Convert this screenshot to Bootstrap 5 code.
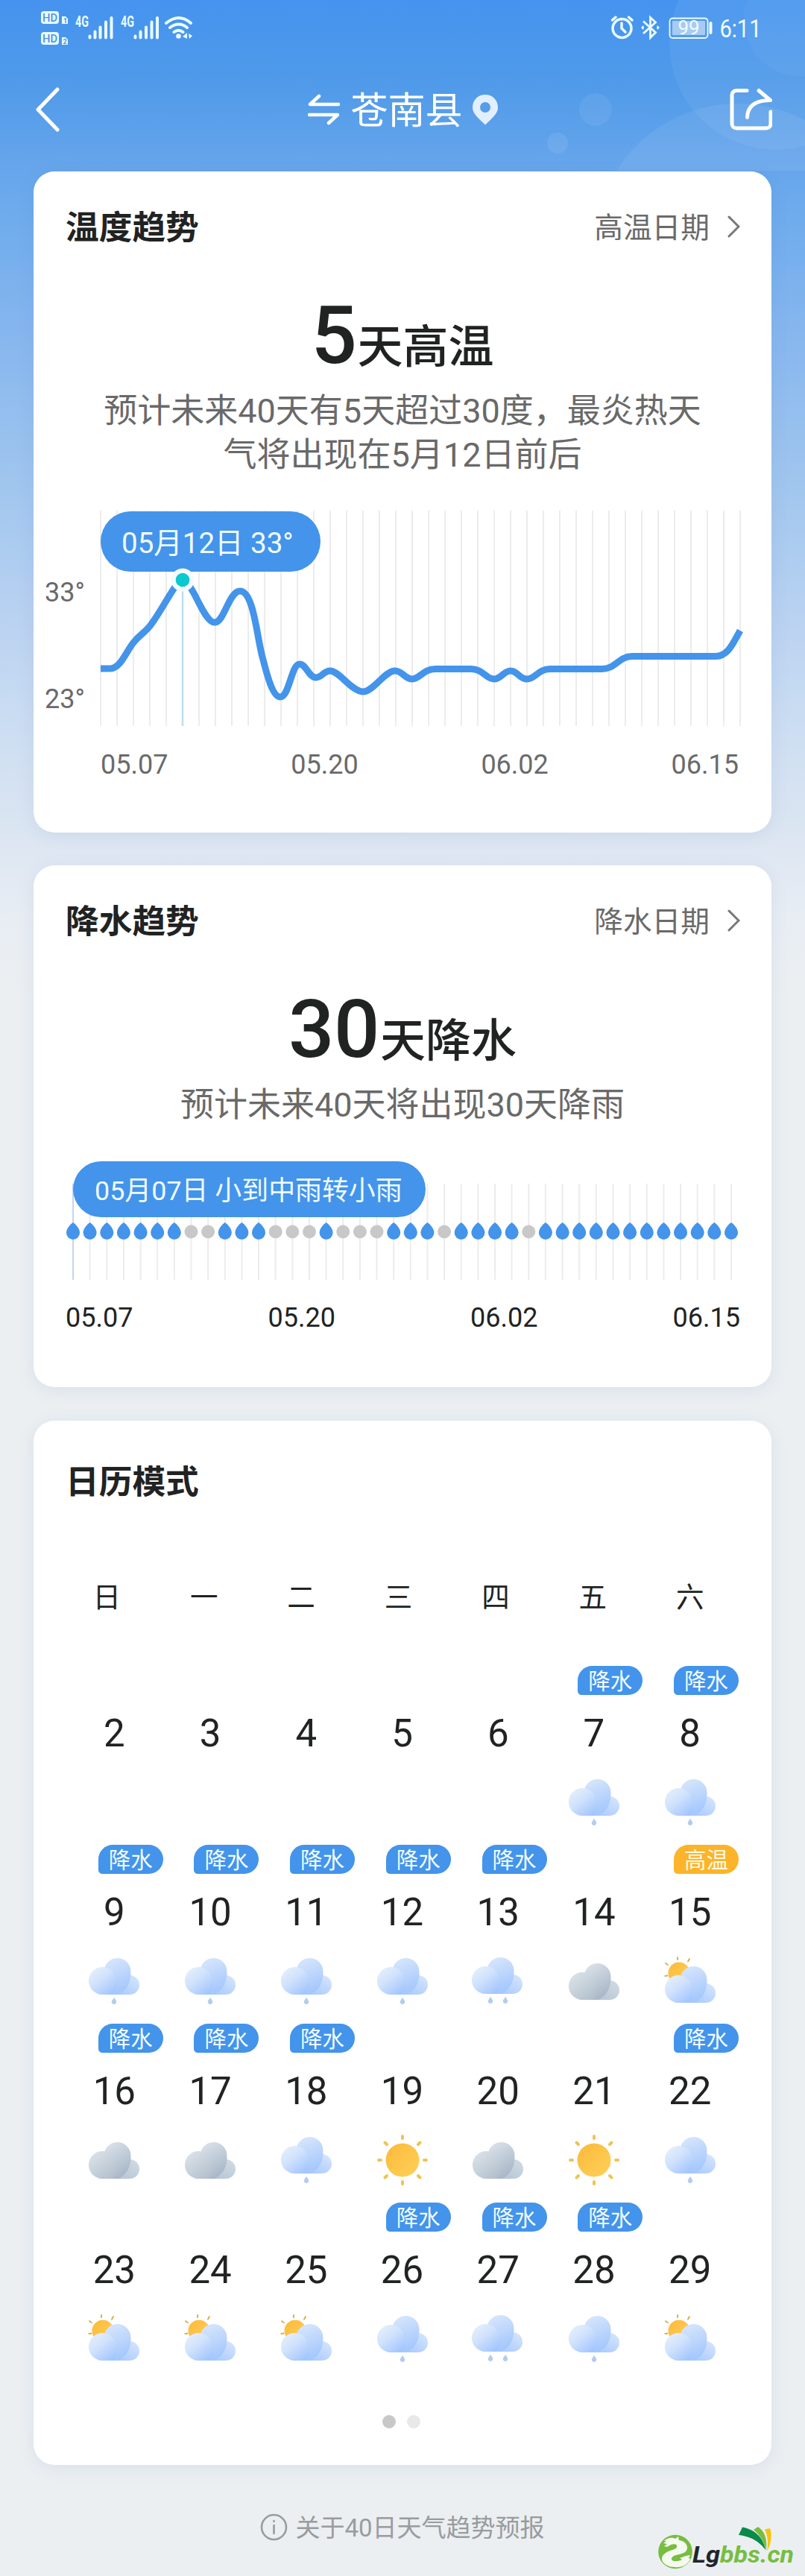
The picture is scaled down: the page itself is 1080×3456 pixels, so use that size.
<!DOCTYPE html>
<html lang="zh-CN">
<head>
<meta charset="utf-8">
<meta name="viewport" content="width=device-width, initial-scale=1">
<title>40日天气趋势</title>
<link href="https://cdn.jsdelivr.net/npm/bootstrap@5.3.0/dist/css/bootstrap.min.css" rel="stylesheet">
<style>
  body { width: 1080px; height: 3456px; font-family: Roboto, "Noto Sans CJK SC", sans-serif; color: #212323; overflow-x: hidden;
    background: linear-gradient(180deg, #4593ef 0, #4f9ae9 110px, #66a5eb 220px, #6dabed 280px, #84b5ee 430px, #9fc5ee 640px, #b5d0f1 800px, #cfdff2 1000px, #dde6f2 1130px, #e8edf4 1230px, #ebeff2 1330px) no-repeat #ebeff2; }
  svg { display: block; flex: none; }
  .sky-bubbles { position: absolute; top: 0; right: 0; z-index: 0; }
  .statusbar { height: 72px; padding: 0 54px 0 55px; }
  .topnav { height: 158px; padding: 0 44px 8px 46px; }
  .place { font-size: 50px; line-height: 60px; color: #fff; padding-top: 3px; margin: 0 12px 0 15px; }
  .panel { width: 990px; border: 0; border-radius: 28px; background: #fff; box-shadow: 0 4px 22px rgba(80,110,170,.10); }
  .panel-temp { height: 887px; }
  .panel-rain { height: 700px; margin-top: 44px; }
  .panel-cal { height: 1401px; margin-top: 45px; }
  .panel-head { height: 148px; padding: 4px 42px 0 43px; }
  .panel-cal .panel-head { height: 162px; }
  .panel-title { font-size: 44.7px; line-height: 60px; font-weight: 700; margin: 0; }
  .panel-link { font-size: 38.7px; line-height: 60px; color: #6a6a6a; text-decoration: none; }
  .headline { height: 144px; padding-top: 22px; line-height: 100px; }
  .headline-num { font-size: 108px; font-weight: 500; letter-spacing: -.5px; }
  .headline-unit { font-size: 61px; font-weight: 500; margin-left: 1px; }
  .summary { font-size: 45px; line-height: 59px; color: #696969; margin: 0; }
  .temp-chart { height: 289px; margin-top: 45px; }
  .rain-chart { height: 159px; margin-top: 46px; }
  .bubble { position: absolute; background: #4394ea; color: #f0fcff; border-radius: 41px; white-space: nowrap; }
  .bubble-temp { left: 90px; top: 1px; width: 295px; height: 81px; font-size: 38.5px; line-height: 86px; padding-left: 28px; }
  .bubble-rain { left: 53px; top: 0; width: 473px; height: 75px; font-size: 35.9px; line-height: 80px; padding-left: 29px; }
  .deg { position: absolute; left: 15px; font-size: 36px; line-height: 40px; color: #6a6a6a; }
  .deg-hi { top: 90px; } .deg-lo { top: 233px; }
  .axis { font-size: 36px; line-height: 50px; }
  .axis-temp { color: #6a6a6a; padding: 0 44px 0 90px; margin-top: 27px; }
  .axis-rain { padding: 0 42px 0 43px; margin-top: 26px; }
  .week { font-size: 37.5px; line-height: 60px; padding: 0 44px 0 33px; margin: 45px 0 62px; }
  .week > div, .days > div { flex: 1 1 0; width: 0; min-width: 0; text-align: center; }
  .days { padding: 0 45px 0 44px; height: 240px; }
  .tagline { height: 39px; }
  .tag { display: block; width: 87px; height: 39px; line-height: 42px; font-size: 29.5px; color: #f2fdff; background: #4394ea; border-radius: 22px 22px 22px 6px; margin-left: 42.7px; }
  .tag.hot { background: #fcb42a; color: #fffbe6; }
  .daynum { font-size: 51px; line-height: 60px; margin: 22px 0 26px; height: 60px; }
  .wx { width: 72px; height: 72px; margin: 0 auto; }
  .pages { gap: 15px; padding: 45px 3px 0 0; }
  .pg { width: 18px; height: 18px; border-radius: 50%; background: #c8c8c8; }
  .pg-off { background: #e8e8e8; }
  .about { font-size: 33px; line-height: 50px; color: #999c9e; margin-top: 57px; gap: 10px; }
  .about span { padding-top: 3px; }
  .watermark { position: absolute; left: 880px; top: 3386px; }
</style>
</head>
<body class="position-relative">

<svg class="sky-bubbles" width="380" height="229" viewBox="700 0 380 229">
  <g fill="#fff">
    <circle cx="1041" cy="58" r="143" opacity=".06"/>
    <circle cx="1076" cy="25" r="78" opacity=".04"/>
    <circle cx="990" cy="332" r="193" opacity=".07"/>
    <circle cx="799" cy="147" r="22" opacity=".07"/>
    <circle cx="748" cy="192" r="14" opacity=".08"/>
  </g>
</svg>

<div class="statusbar position-relative d-flex justify-content-between">
  <svg width="210" height="72" viewBox="55 0 210 72" fill="#eafcff" font-family="Roboto, sans-serif">
    <rect x="55" y="15" width="24" height="17" rx="4"/>
    <text x="57" y="29" font-size="15" font-weight="500" fill="#4c92e4" textLength="20" lengthAdjust="spacingAndGlyphs">HD</text>
    <path d="M83 22h5l3 3v7h-8z"/>
    <text x="85" y="30.500" font-size="9" font-weight="700" fill="#4c92e4">1</text>
    <rect x="55" y="43" width="24" height="17" rx="4"/>
    <text x="57" y="57" font-size="15" font-weight="500" fill="#4c92e4" textLength="20" lengthAdjust="spacingAndGlyphs">HD</text>
    <path d="M83 50h5l3 3v7h-8z"/>
    <text x="84.500" y="58.500" font-size="9" font-weight="700" fill="#4c92e4">2</text>
    <text x="101" y="36" font-size="20" font-weight="700" textLength="18" lengthAdjust="spacingAndGlyphs">4G</text>
    <text x="162" y="36" font-size="20" font-weight="700" textLength="18" lengthAdjust="spacingAndGlyphs">4G</text>
    <path stroke="#eafcff" stroke-width="4" stroke-linecap="round" d="M120.500 48.500v2M127.500 42.500v8M134.500 36.500v14M142 29.500v21M149.500 24v26.500M181.500 48.500v2M188.500 42.500v8M196 36.500v14M203.500 29.500v21M211 24v26.500"/>
    <g fill="none" stroke="#eafcff" stroke-width="4" stroke-linecap="round">
      <path d="M223 31q17-14 33 0M228 37q12-9 23 0M233.500 43q6-4.500 12 0"/>
    </g>
    <circle cx="239.500" cy="48.500" r="3.300"/>
    <path d="M245 49l6-5v8zM253 45l5 3-4 4z"/>
  </svg>
  <svg width="210" height="72" viewBox="816 0 210 72" fill="none" stroke="#eafcff" font-family="Roboto, sans-serif">
    <circle cx="834.500" cy="38" r="12.500" stroke-width="3.500"/>
    <path stroke-width="3.500" stroke-linecap="round" d="M834 31v7l5 5M821.500 27l4.500-4M848 27l-4.500-4"/>
    <path stroke-width="2.800" d="M863 28.500l16.500 15-7 7V23.500l7 6.500-16.500 15"/>
    <path fill="#eafcff" stroke="none" d="M860 37l3-3 1 3-1 3zM885 37l-3-3-1 3 1 3z"/>
    <rect x="898.500" y="24.500" width="51" height="26.500" rx="4" stroke-width="1.800"/>
    <rect x="902" y="28" width="44" height="19" rx="1" fill="#a7cbf3" stroke="none"/>
    <path stroke-width="4" stroke-linecap="round" d="M953.500 31v13"/>
    <g fill="#f0fdff" stroke="none">
      <text x="909.500" y="46" font-size="25" textLength="29" lengthAdjust="spacingAndGlyphs">99</text>
      <text x="965.500" y="50" font-size="34" textLength="56" lengthAdjust="spacingAndGlyphs">6:11</text>
    </g>
  </svg>
</div>

<nav class="topnav position-relative d-flex align-items-center justify-content-between">
  <svg width="56" height="60" viewBox="0 0 56 60" fill="none" stroke="#fff" stroke-width="5" stroke-linecap="round" stroke-linejoin="round"><path d="M31 3L5 30l26 27"/></svg>
  <div class="d-flex align-items-center">
    <svg width="43" height="42" viewBox="0 0 43 42" fill="none" stroke="#fff" stroke-width="4.500" stroke-linecap="round" stroke-linejoin="round"><path d="M15 3L3 14h38M2 28h38L28 39"/></svg>
    <span class="place">苍南县</span>
    <svg width="36" height="42" viewBox="0 0 36 42"><path fill="#e1efff" fill-rule="evenodd" d="M18 1C8 1 1 8.500 1 18c0 8 6 13 17 23.500C29 31 35 26 35 18 35 8.500 28 1 18 1zm0 10a7 7 0 1 1 0 14 7 7 0 0 1 0-14z"/></svg>
  </div>
  <svg width="57" height="58" viewBox="0 0 57 58" fill="none" stroke="#fff" stroke-width="5" stroke-linecap="round" stroke-linejoin="round"><path d="M23 3.500H9a6 6 0 0 0-6 6V48a6 6 0 0 0 6 6h40a6 6 0 0 0 6-6V32"/><path d="M23.500 39.500C24 25 33 16.500 54.500 16.500L39 3.500"/></svg>
</nav>

<main class="position-relative d-flex flex-column align-items-center">
  <section class="card panel panel-temp">
    <div class="panel-head d-flex align-items-center justify-content-between">
      <h2 class="panel-title">温度趋势</h2>
      <a class="panel-link d-flex align-items-center gap-4" href="#">高温日期
        <svg class="mb-1" width="17" height="32" viewBox="0 0 17 32" fill="none" stroke="#777" stroke-width="3" stroke-linecap="round"><path d="M2 3l13 13L2 29"/></svg></a>
    </div>
    <div class="headline d-flex justify-content-center align-items-baseline"><span class="headline-num">5</span><span class="headline-unit">天高温</span></div>
    <p class="summary text-center">预计未来40天有5天超过30度，最炎热天<br>气将出现在5月12日前后</p>
    <div class="temp-chart position-relative">
      <svg width="990" height="289" viewBox="45 685 990 289" fill="none">
        <g id="tempGrid" stroke="#ececec" stroke-width="2"></g>
        <path stroke="#bcdff2" stroke-width="2.500" d="M245 778V974"/>
        <path stroke="#4394ea" stroke-width="9" d="M135 897H148C162 897 170 872 180 861C189 850 196 848 204 836C217 818 228 796 236 786Q245 773 254 786C265 801 276 835 288 835C301 835 307 793 322 793C341 793 345 860 353 885C358 905 366 935 376 935C388 935 391 891 402 891C411 891 414 909 424 909C432 909 434 900 443 900C455 900 472 928 487 928C501 928 516 900 530 900C540 900 543 911 553 911C563 911 568 897.500 584 897.500H632C648 897.500 652 911 663 911C672 911 676 900 685 900C694 900 697 911 707 911C718 911 722 897.500 738 897.500H808C826 897.500 830 880.500 848 880.500H960C977 880.500 984 862 993 846"/>
      </svg>
      <div class="bubble bubble-temp">05月12日 33°</div>
      <svg class="position-absolute top-0 start-0" width="990" height="289" viewBox="45 685 990 289"><circle cx="245" cy="778" r="15.500" fill="#f3fbff"/><circle cx="245" cy="778" r="9.300" fill="#0cc8cf"/></svg>
      <span class="deg deg-hi">33°</span>
      <span class="deg deg-lo">23°</span>
    </div>
    <div class="axis axis-temp d-flex justify-content-between"><span>05.07</span><span>05.20</span><span>06.02</span><span>06.15</span></div>
  </section>

  <section class="card panel panel-rain">
    <div class="panel-head d-flex align-items-center justify-content-between">
      <h2 class="panel-title">降水趋势</h2>
      <a class="panel-link d-flex align-items-center gap-4" href="#">降水日期
        <svg class="mb-1" width="17" height="32" viewBox="0 0 17 32" fill="none" stroke="#777" stroke-width="3" stroke-linecap="round"><path d="M2 3l13 13L2 29"/></svg></a>
    </div>
    <div class="headline d-flex justify-content-center align-items-baseline"><span class="headline-num">30</span><span class="headline-unit">天降水</span></div>
    <p class="summary text-center">预计未来40天将出现30天降雨</p>
    <div class="rain-chart position-relative">
      <svg width="990" height="159" viewBox="45 1558 990 159">
        <g id="rainGrid" stroke="#ececec" stroke-width="2"></g>
        <g id="rainDrops"></g>
      </svg>
      <div class="bubble bubble-rain">05月07日 小到中雨转小雨</div>
    </div>
    <div class="axis axis-rain d-flex justify-content-between"><span>05.07</span><span>05.20</span><span>06.02</span><span>06.15</span></div>
  </section>

  <section class="card panel panel-cal">
    <div class="panel-head d-flex align-items-center"><h2 class="panel-title">日历模式</h2></div>
    <div class="week d-flex"><div>日</div><div>一</div><div>二</div><div>三</div><div>四</div><div>五</div><div>六</div></div>
    <div id="calendar"></div>
    <div class="pages d-flex justify-content-center"><span class="pg"></span><span class="pg pg-off"></span></div>
  </section>
</main>

<footer class="about d-flex justify-content-center align-items-center">
  <svg width="37" height="37" viewBox="0 0 37 37" fill="none" stroke="#999c9e" stroke-width="2.600" stroke-linecap="round"><circle cx="18.500" cy="18.500" r="16.500"/><path d="M18.500 16v11M18.500 10v.8"/></svg>
  <span>关于40日天气趋势预报</span>
</footer>

<svg class="watermark" width="190" height="66" viewBox="880 3386 190 66">
  <circle cx="906" cy="3423.500" r="22.800" fill="#77bd3f"/>
  <path fill="#f4faf0" d="M891 3409c5-5 11-5 15-3l4-3 1 5c7 1 11 5 11 10 0 6-6 8-11 9-6 1-10 3-10 6 0 4 9 4 14 1l-3-2 8-3 6-1-2 4 2 1c-4 9-12 12-21 11-9 0-17-5-17-11 0-7 8-10 14-12 4-1 7-3 6-6-1-2-4-2-8-1l-5 3-4-1 4-3-5-1 4-3z"/>
  <g font-family="Roboto, sans-serif" font-size="32" font-weight="700" font-style="italic">
    <text x="929" y="3437.500" fill="#20252b" textLength="37" lengthAdjust="spacingAndGlyphs">Lg</text>
    <text x="966" y="3437.500" fill="#77bd3f" textLength="99" lengthAdjust="spacingAndGlyphs">bbs.cn</text>
  </g>
  <path fill="#098a48" d="M996 3390.500l-5 10.500c17 2 28 9 36 20-3-16-13-27-31-30.500z"/>
  <path fill="#7abc3d" d="M1017 3390l-6 4c9 7 14 16 16.500 28 2.500-15-1.500-26-10.500-32z"/>
  <path fill="#f9c20d" d="M1033 3392l-7 1.500c4 9 5 17 3 29 6-9 7-23 4-30.500z"/>
</svg>

<svg width="0" height="0" class="position-absolute">
  <defs>
    <linearGradient id="bBack" x1="0" y1="0" x2=".3" y2="1"><stop offset="0" stop-color="#dbe8fb"/><stop offset="1" stop-color="#a5c8fd"/></linearGradient>
    <linearGradient id="bSide" x1="1" y1="0" x2="0" y2="1"><stop offset="0" stop-color="#d8e7fc"/><stop offset="1" stop-color="#9fc3ff"/></linearGradient>
    <linearGradient id="bFront" x1="0" y1="0" x2=".8" y2="1"><stop offset="0" stop-color="#eaf3fd"/><stop offset=".5" stop-color="#cfe1fc"/><stop offset="1" stop-color="#a2c5ff"/></linearGradient>
    <linearGradient id="gBack" x1="0" y1="0" x2=".5" y2="1"><stop offset="0" stop-color="#dfe6ee"/><stop offset="1" stop-color="#a9b8c8"/></linearGradient>
    <linearGradient id="gSide" x1="1" y1="0" x2="0" y2="1"><stop offset="0" stop-color="#d2dce6"/><stop offset="1" stop-color="#b1bfcd"/></linearGradient>
    <linearGradient id="gFront" x1="0" y1="0" x2=".8" y2="1"><stop offset="0" stop-color="#e0e6eb"/><stop offset="1" stop-color="#b2c0cc"/></linearGradient>
    <linearGradient id="sunFill" x1="0" y1="0" x2="1" y2="1"><stop offset="0" stop-color="#fbb93b"/><stop offset="1" stop-color="#ffd158"/></linearGradient>
  </defs>
</svg>

<script src="https://cdn.jsdelivr.net/npm/bootstrap@5.3.0/dist/js/bootstrap.bundle.min.js"></script>
<script>
  // Cloud body: a small right lobe, a tall middle lobe and a wide front lobe on a flat base.
  function cloud(tone, dy) {
    const k = tone === 'gray' ? 'g' : 'b';
    return `<g transform="translate(0 ${dy})">
      <path fill="url(#${k}Side)" d="M22 54H57A13 13 0 0 0 57 28L40 34z"/>
      <path fill="url(#${k}Back)" d="M22.500 23A18 18 0 1 1 58.500 23C59 38 53 48 42 54H24z"/>
      <path fill="url(#${k}Front)" d="M20.500 54A18.500 18.500 0 1 1 36 25.500Q45 42 34 54z"/></g>`;
  }
  const drop = x => `<path fill="#b4ccee" d="M${x} 57.500C${x + 1.5} 61 ${x + 4} 62 ${x + 3} 65A3.200 3.200 0 0 1 ${x - 3} 65C${x - 4} 62 ${x - 1} 61 ${x} 57.500z"/>`;
  const icons = {
    rain: cloud('blue', 0) + drop(36),
    rain2: `<g transform="translate(-1 -1)">${cloud('blue', 0)}${drop(27)}${drop(47)}</g>`,
    cloudy: cloud('gray', 7),
    partly: `<circle cx="21" cy="25" r="14.500" fill="url(#sunFill)"/><path stroke="#dbb04e" stroke-width="2" stroke-linecap="round" d="M3 12l3 2M19 4v3M35 6l-2 3.500M2.500 29l3-.5"/>` + cloud('blue', 11),
    sun: `<circle cx="36" cy="36" r="22.500" fill="url(#sunFill)"/><path stroke="#f0c453" stroke-width="4" stroke-linecap="round" d="M36 4v3M36 65v3M4 36h3M65 36h3M12.500 12.500l2.500 2.500M57 57l2.500 2.500M12.500 59.500l2.500-2.500M57 15l2.500-2.500"/>`
  };
  const rainy = '降水', hot = '高温';
  const rows = [
    [[2], [3], [4], [5], [6], [7, 'rain', rainy], [8, 'rain', rainy]],
    [[9, 'rain', rainy], [10, 'rain', rainy], [11, 'rain', rainy], [12, 'rain', rainy], [13, 'rain2', rainy], [14, 'cloudy'], [15, 'partly', hot]],
    [[16, 'cloudy', rainy], [17, 'cloudy', rainy], [18, 'rain', rainy], [19, 'sun'], [20, 'cloudy'], [21, 'sun'], [22, 'rain', rainy]],
    [[23, 'partly'], [24, 'partly'], [25, 'partly'], [26, 'rain', rainy], [27, 'rain2', rainy], [28, 'rain', rainy], [29, 'partly']]
  ];
  document.getElementById('calendar').innerHTML = rows.map(r => '<div class="days d-flex">' + r.map(([n, w, t]) =>
    `<div><div class="tagline">${t ? `<span class="tag${t === hot ? ' hot' : ''}">${t}</span>` : ''}</div><div class="daynum">${n}</div>${w ? `<svg class="wx" viewBox="0 0 72 72">${icons[w]}</svg>` : ''}</div>`).join('') + '</div>').join('');

  let a = '', b = '', d = '';
  const dry = new Set([7, 8, 12, 13, 14, 16, 17, 18, 22, 27]);
  for (let i = 0; i < 40; i++) {
    a += `<path d="M${135 + i * 22} 685V974"/>`;
    const x = +(98 + i * 22.64).toFixed(1);
    b += `<path d="M${x} 1588V1717"${i ? '' : ' stroke="#c0d8f0"'}/>`;
    d += dry.has(i) ? `<circle cx="${x}" cy="1652.500" r="9" fill="#c8c8c8"/>`
      : `<path fill="#4394ea" d="M${x} 1640C${x + 4} 1643 ${x + 9} 1648 ${x + 9} 1654A9 9 0 0 1 ${x - 9} 1654C${x - 9} 1648 ${x - 4} 1643 ${x} 1640z"/>`;
  }
  document.getElementById('tempGrid').innerHTML = a;
  document.getElementById('rainGrid').innerHTML = b;
  document.getElementById('rainDrops').innerHTML = d;
</script>
</body>
</html>
